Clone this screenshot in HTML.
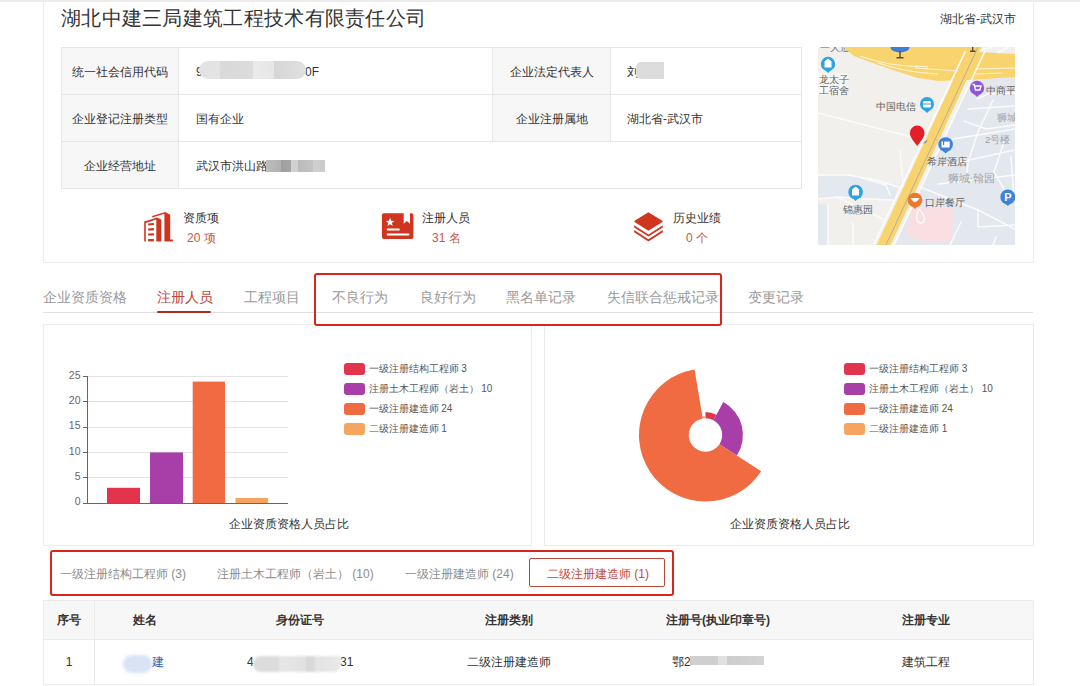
<!DOCTYPE html>
<html><head><meta charset="utf-8">
<style>
*{margin:0;padding:0;box-sizing:border-box}
html,body{width:1080px;height:686px;overflow:hidden;background:#fff}
body{position:relative;font-family:"Liberation Sans",sans-serif;color:#333}
.a{position:absolute;white-space:nowrap}
.box{position:absolute;border:1px solid #e6e6e6}
.cell{position:absolute;font-size:12px;color:#333;line-height:49px;height:46px}
.lab{background:#f7f7f7;text-align:center}
.redbox{position:absolute;z-index:5;border:2px solid #d9261c;border-radius:3px}
.tab{position:absolute;top:287px;font-size:14px;color:#999;line-height:20px}
.leg{position:absolute;font-size:10px;color:#555;line-height:14px}
.sw{position:absolute;width:21px;height:12px;border-radius:3px}
.th{position:absolute;top:600px;height:40px;line-height:40px;font-size:12px;font-weight:bold;color:#333;text-align:center}
.td{position:absolute;top:640px;height:44px;line-height:44px;font-size:12px;color:#333;text-align:center}
.blur{position:absolute;background:#cfcfcf;filter:blur(2px);border-radius:4px}
</style></head><body>
<!-- top strip line -->
<div class="a" style="left:0;top:0;width:1080px;height:2px;background:#ededed"></div>
<!-- outer container -->
<div class="box" style="left:43px;top:1px;width:991px;height:262px;border-top:none;border-color:#ececec"></div>
<div class="a" style="left:61px;top:7px;font-size:20px;line-height:22px;color:#333;letter-spacing:0.3px">湖北中建三局建筑工程技术有限责任公司</div>
<div class="a" style="left:940px;top:11px;font-size:12px;line-height:16px;color:#333">湖北省-武汉市</div>

<!-- info table -->
<div class="box" style="left:61px;top:47px;width:741px;height:142px"></div>
<div class="cell lab" style="left:62px;top:48px;width:116px">统一社会信用代码</div>
<div class="cell lab" style="left:62px;top:95px;width:116px">企业登记注册类型</div>
<div class="cell lab" style="left:62px;top:142px;width:116px">企业经营地址</div>
<div class="cell lab" style="left:493px;top:48px;width:117px">企业法定代表人</div>
<div class="cell lab" style="left:493px;top:95px;width:117px">企业注册属地</div>
<div class="a" style="left:61px;top:94px;width:741px;height:1px;background:#e6e6e6"></div>
<div class="a" style="left:61px;top:141px;width:741px;height:1px;background:#e6e6e6"></div>
<div class="a" style="left:178px;top:47px;width:1px;height:142px;background:#e6e6e6"></div>
<div class="a" style="left:492px;top:47px;width:1px;height:94px;background:#e6e6e6"></div>
<div class="a" style="left:610px;top:47px;width:1px;height:94px;background:#e6e6e6"></div>
<div class="cell" style="left:196px;top:48px">9</div>
<div class="cell" style="left:305px;top:48px">0F</div>
<div class="a" style="left:199px;top:61px;width:107px;height:18px;border-radius:9px;background:linear-gradient(90deg,#e3e3e3 0,#e3e3e3 20%,#d9d9d9 20%,#dcdcdc 50%,#ebebeb 50%,#e6e6e6 70%,#d6d6d6 70%,#e0e0e0 100%);filter:blur(0.6px)"></div>
<div class="cell" style="left:196px;top:95px">国有企业</div>
<div class="cell" style="left:196px;top:142px">武汉市洪山路</div>
<div class="a" style="left:266px;top:160px;width:59px;height:12px;background:linear-gradient(90deg,#bdbdbd 0,#b0b0b0 25%,#9e9e9e 25%,#a5a5a5 42%,#d2d2d2 42%,#cfcfcf 55%,#bababa 55%,#c4c4c4 80%,#d0d0d0 80%,#cacaca 100%);filter:blur(0.6px)"></div>
<div class="cell" style="left:627px;top:48px">刘</div>
<div class="a" style="left:636px;top:62px;width:28px;height:17px;border-radius:5px 0 0 5px;background:#dcdcdc;filter:blur(0.6px)"></div>
<div class="cell" style="left:627px;top:95px">湖北省-武汉市</div>

<!-- stats -->
<div class="a" style="left:183px;top:210px;font-size:12px;line-height:16px;color:#333">资质项</div>
<div class="a" style="left:187px;top:230px;font-size:12px;line-height:16px;color:#c4584a">20 项</div>
<div class="a" style="left:422px;top:210px;font-size:12px;line-height:16px;color:#333">注册人员</div>
<div class="a" style="left:432px;top:230px;font-size:12px;line-height:16px;color:#c4584a">31 名</div>
<div class="a" style="left:673px;top:210px;font-size:12px;line-height:16px;color:#333">历史业绩</div>
<div class="a" style="left:686px;top:230px;font-size:12px;line-height:16px;color:#c4584a">0 个</div>

<!-- map placeholder -->
<svg class="a" style="left:818px;top:47px" width="197" height="198" viewBox="0 0 197 198">
<rect width="197" height="198" fill="#f1f0ed"/>
<!-- blue-gray regions -->
<path d="M153 33 L197 29 L197 198 L77 198 Z" fill="#e3e7ee"/>
<path d="M0 128 L30 128 L58 133 L80 140 L76 153 L50 152 L20 150 L0 152 Z" fill="#e4e8ef"/>
<path d="M0 156 L9 158 L10 198 L0 198 Z" fill="#e4e8ef"/>
<!-- pink -->
<path d="M94 161 L135 161 L134 194 L108 195 L87 188 Z" fill="#f9dfe1"/>
<!-- white minor roads -->
<g stroke="#fbfbfb" stroke-width="1.5" fill="none" stroke-linecap="round">
<path d="M0 66 L98 91"/>
<path d="M0 152 L20 150 L50 152 L76 153"/>
<path d="M0 128 L30 128 L58 133 L80 140"/>
<path d="M10 158 L10 198"/>
<path d="M19 150 L65 172"/>
<path d="M44 131 L68 138 L72 148"/>
<path d="M35 176 L35 198"/>
<path d="M82 103 L86 148" stroke-width="1.2"/>
<path d="M159 52 L170 47 L197 46"/>
<path d="M150 62 L197 59"/>
<path d="M146 74 L168 82 L197 78"/>
<path d="M135 92 L197 82"/>
<path d="M128 118 L197 103"/>
<path d="M175 53 L160 85 L150 115 L148 136"/>
<path d="M186 95 L176 125 L186 142"/>
<path d="M120 137 L197 128"/>
<path d="M102 140 L160 163 L197 182"/>
<path d="M160 163 L160 180 L197 178"/>
<path d="M143 175 L132 198"/>
<path d="M178 190 L175 198"/>
<path d="M100 164 Q96 176 104 176 Q110 172 101 162"/>
<path d="M193 110 L196 150"/>
</g>
<rect x="-2" y="26" width="32" height="22" rx="2" fill="#f7f7f6"/>
<text x="2" y="3.5" font-family="Liberation Sans" font-size="9.6" fill="#6a6a6a">一大道</text>
<!-- highway band -->
<path d="M25 0 L152 0 L160 5 L197 7 L197 30 L150 33 L120 34 L100 31 L75 23 L52 15 L36 9 Z" fill="#f8d36e"/>
<path d="M160 4 L175 0 M180 6 L190 0" stroke="#fbfbfb" stroke-width="1.5"/>
<g stroke="#fffbe8" stroke-width="1.1" fill="none" opacity="0.85">
<path d="M42 9 Q62 16 80 18 L100 20"/>
<path d="M60 16 Q90 26 120 27"/>
<path d="M97 19 L110 20"/>
<path d="M157 22 L197 21"/>
<path d="M158 27 L185 26"/>
<path d="M97 21 L140 24"/>
</g>
<!-- diagonal road -->
<path d="M150.6 0 L163.7 0 L72.6 198 L58.6 198 Z" fill="#f8d36e"/>
<path d="M160 0 L68 198" stroke="#a9aca8" stroke-width="0.9" fill="none"/>
<path d="M147.5 4 L55.5 198" stroke="#fdfdfd" stroke-width="1.6" fill="none"/>
<path d="M167 4 L76 198" stroke="#fdfdfd" stroke-width="1.6" fill="none"/>
<!-- top pin -->
<ellipse cx="82" cy="0.5" rx="9.5" ry="5" fill="#3d7fd6"/>
<rect x="81.3" y="4" width="1.4" height="7" fill="#5a4a3a"/>
<rect x="78.5" y="10" width="7" height="1.5" fill="#5a4a3a"/>
<rect x="154" y="0" width="1.4" height="4.5" fill="#5a4a3a"/>
<rect x="152" y="3.5" width="5.5" height="1.5" fill="#5a4a3a"/>
<!-- POIs -->
<g fill="#2ea3e2">
<circle cx="10" cy="17" r="7.2"/><path d="M5.5 21.5 L10 26 L14.5 21.5 Z"/>
<circle cx="109" cy="57" r="7"/><path d="M104.5 61.5 L109 66 L113.5 61.5 Z"/>
<circle cx="37.6" cy="145" r="7.3"/><path d="M33 149.5 L37.6 154 L42.2 149.5 Z"/>
</g>
<g fill="#fff">
<rect x="6.5" y="15" width="7" height="5.5"/><path d="M6 15 L10 11.5 L14 15 Z"/>
<rect x="105" y="54" width="8" height="6.5" rx="1.5"/>
<rect x="34" y="143" width="7" height="5.5"/><path d="M33.5 143 L37.6 139.5 L41.7 143 Z"/>
</g>
<rect x="105" y="56.5" width="8" height="1" fill="#2ea3e2"/>
<circle cx="159" cy="41" r="7.2" fill="#9155d8"/><path d="M154.5 45.5 L159 50 L163.5 45.5 Z" fill="#9155d8"/>
<path d="M154.5 37.5 L156.2 37.5 L157.5 43 L161.8 43 L163 39 L156.8 39" stroke="#fff" stroke-width="1.4" fill="none"/>
<circle cx="127.6" cy="97.5" r="7.3" fill="#3f82d8"/><path d="M123.2 102 L127.6 106.5 L132 102 Z" fill="#3f82d8"/>
<rect x="123.5" y="94.5" width="8.2" height="6" fill="#fff"/><rect x="125" y="94" width="1.2" height="4" fill="#3f82d8"/>
<circle cx="97" cy="153" r="7.3" fill="#ee7830"/><path d="M92.6 157.5 L97 162 L101.4 157.5 Z" fill="#ee7830"/>
<path d="M92.5 151 Q97 159 101.5 151 Z" fill="#fff"/>
<circle cx="189.8" cy="150" r="7.5" fill="#3f82d8"/><path d="M185.3 154.5 L189.8 159 L194.3 154.5 Z" fill="#3f82d8"/>
<text x="190" y="154" font-family="Liberation Sans" font-weight="bold" font-size="11" fill="#fff" text-anchor="middle">P</text>
<!-- red marker -->
<path d="M104.5 96.5 L109.5 92.5 L108 96 Z" fill="#8c8c8c"/>
<path d="M99.2 99 C93 91.5 91.9 88.5 91.9 85.8 A7.3 7.3 0 0 1 106.5 85.8 C106.5 88.5 105.4 91.5 99.2 99 Z" fill="#e31f29"/>
<!-- labels -->
<g font-family="Liberation Sans" font-size="9.6" fill="#5f5f5f">
<text x="1" y="36">龙太子</text>
<text x="1" y="47">工宿舍</text>
<text x="58" y="63">中国电信</text>
<text x="168.3" y="47">中商平</text>
<text x="108.6" y="118">希岸酒店</text>
<text x="24.5" y="165.5">锦惠园</text>
<text x="107" y="158.5">口岸餐厅</text>
</g>
<g font-family="Liberation Sans" fill="#a2a4a8">
<text x="179" y="74" font-size="9.6">狮城</text>
<text x="167" y="96" font-size="9.6">2号楼</text>
<text x="129.6" y="134.5" font-size="11">狮城·翰园</text>
</g>
</svg>

<!-- tabs -->
<div class="a" style="left:43px;top:312px;width:990px;height:1px;background:#e0e0e0"></div>
<div class="tab" style="left:43px">企业资质资格</div>
<div class="tab" style="left:157px;color:#b9473c">注册人员</div>
<div class="a" style="left:157px;top:311px;width:54px;height:2px;background:#b0291d;border-radius:1px"></div>
<div class="tab" style="left:244px">工程项目</div>
<div class="tab" style="left:332px">不良行为</div>
<div class="tab" style="left:420px">良好行为</div>
<div class="tab" style="left:506px">黑名单记录</div>
<div class="tab" style="left:607px">失信联合惩戒记录</div>
<div class="tab" style="left:748px">变更记录</div>
<div class="redbox" style="left:314px;top:273px;width:408px;height:53px"></div>

<!-- chart panels -->
<div class="box" style="left:43px;top:324px;width:489px;height:222px;border-color:#ebebeb"></div>
<div class="box" style="left:544px;top:324px;width:490px;height:222px;border-color:#ebebeb"></div>


<!-- charts svg -->
<svg class="a" style="left:0;top:0" width="1080" height="686" viewBox="0 0 1080 686">
<g stroke="#e3e3e3" stroke-width="1">
<line x1="88" y1="376.5" x2="288" y2="376.5"/>
<line x1="88" y1="401.5" x2="288" y2="401.5"/>
<line x1="88" y1="427.5" x2="288" y2="427.5"/>
<line x1="88" y1="452.5" x2="288" y2="452.5"/>
<line x1="88" y1="477.5" x2="288" y2="477.5"/>
</g>
<g fill="#e3344d"><rect x="107" y="487.8" width="33" height="15.2"/></g>
<rect x="150" y="452.4" width="33" height="50.6" fill="#a83fa8"/>
<rect x="192.7" y="381.6" width="32.3" height="121.4" fill="#f06b42"/>
<rect x="235.5" y="497.9" width="32.5" height="5.1" fill="#f5a560"/>
<g stroke="#666" stroke-width="1">
<line x1="87.5" y1="376" x2="87.5" y2="503.5"/>
<line x1="83" y1="503.5" x2="288" y2="503.5"/>
<line x1="83" y1="376.5" x2="88" y2="376.5"/>
<line x1="83" y1="401.5" x2="88" y2="401.5"/>
<line x1="83" y1="427.5" x2="88" y2="427.5"/>
<line x1="83" y1="452.5" x2="88" y2="452.5"/>
<line x1="83" y1="477.5" x2="88" y2="477.5"/>
</g>
<g font-family="Liberation Sans" font-size="10.5" fill="#666" text-anchor="end">
<text x="80.5" y="378.8">25</text>
<text x="80.5" y="404.1">20</text>
<text x="80.5" y="429.4">15</text>
<text x="80.5" y="454.7">10</text>
<text x="80.5" y="480">5</text>
<text x="80.5" y="505.3">0</text>
</g>
<path d="M705.50 412.07 A22.92 22.92 0 0 1 716.41 414.84 L713.45 420.31 A16.70 16.70 0 0 0 705.50 418.30 Z" fill="#e3344d"/>
<path d="M723.32 402.06 A37.45 37.45 0 0 1 736.85 455.48 L719.48 444.13 A16.70 16.70 0 0 0 713.45 420.31 Z" fill="#a83fa8"/>
<path d="M761.17 471.37 A66.50 66.50 0 1 1 694.55 369.41 L702.75 418.53 A16.70 16.70 0 1 0 719.48 444.13 Z" fill="#f06b42"/>
<path d="M702.41 416.48 A18.77 18.77 0 0 1 705.50 416.23 L705.50 418.30 A16.70 16.70 0 0 0 702.75 418.53 Z" fill="#f5a560"/>
<!-- icons -->
<g transform="translate(140,208)" fill="#d0361f">
<path d="M4.2 13.6 L17.2 9.4 L21.3 11.4 L21.3 33.6 L16.3 33.6 L16.3 11.5 L5.8 14.9 L5.8 33.6 L4.2 33.6 Z"/>
<path d="M12.1 7.9 L25.2 3.9 L30.2 6.8 L30.2 31.5 L32.9 31.5 L32.9 33.6 L24.4 33.6 L24.4 5.8 L12.3 9.5 Z"/>
<path d="M8.1 15.4 L13.9 14.9 L13.9 17.1 L8.1 17.5 Z"/>
<path d="M8.1 20.4 L13.9 20.1 L13.9 22.4 L8.1 22.6 Z"/>
<path d="M8.1 25.4 L13.9 25.2 L13.9 27.4 L8.1 27.6 Z"/>
<rect x="8.1" y="31" width="5.8" height="2.4"/>
</g>
<g transform="translate(378,208)">
<rect x="3.9" y="5.2" width="31.5" height="25.8" rx="2" fill="#d0361f"/>
<path d="M25.7 5 L32 5 L32 15.8 L28.85 12.9 L25.7 15.8 Z" fill="#fff"/>
<path d="M12.1 9.8 L13.2 12.8 L16.4 12.9 L13.9 14.9 L14.8 18 L12.1 16.2 L9.4 18 L10.3 14.9 L7.8 12.9 L11 12.8 Z" fill="#fff"/>
<rect x="8.7" y="20.5" width="13.1" height="2" rx="1" fill="#fff"/>
<rect x="8.7" y="25.5" width="22.8" height="2" rx="1" fill="#fff"/>
</g>
<g transform="translate(630,208)" fill="#d0361f">
<path d="M18.4 5 L32 13.4 L18.4 21.9 L5 13.4 Z" stroke="#d0361f" stroke-width="1.4" stroke-linejoin="round"/>
<path d="M4.2 17.3 L18.4 26.4 L32.8 17.3 L32.8 19.5 L18.4 28.6 L4.2 19.5 Z"/>
<path d="M4.2 22 L18.4 31.2 L32.8 22 L32.8 24.2 L18.4 33.4 L4.2 24.2 Z"/>
</g>
</svg>
<div class="sw" style="left:343.5px;top:363.3px;background:#e3344d"></div>
<div class="sw" style="left:343.5px;top:383.3px;background:#a83fa8"></div>
<div class="sw" style="left:343.5px;top:403.3px;background:#f06b42"></div>
<div class="sw" style="left:343.5px;top:423.3px;background:#f5a560"></div>
<div class="leg" style="left:368.5px;top:362px">一级注册结构工程师 3</div>
<div class="leg" style="left:368.5px;top:382px">注册土木工程师（岩土） 10</div>
<div class="leg" style="left:368.5px;top:402px">一级注册建造师 24</div>
<div class="leg" style="left:368.5px;top:422px">二级注册建造师 1</div>
<div class="sw" style="left:843.6px;top:363.3px;background:#e3344d"></div>
<div class="sw" style="left:843.6px;top:383.3px;background:#a83fa8"></div>
<div class="sw" style="left:843.6px;top:403.3px;background:#f06b42"></div>
<div class="sw" style="left:843.6px;top:423.3px;background:#f5a560"></div>
<div class="leg" style="left:869px;top:362px">一级注册结构工程师 3</div>
<div class="leg" style="left:869px;top:382px">注册土木工程师（岩土） 10</div>
<div class="leg" style="left:869px;top:402px">一级注册建造师 24</div>
<div class="leg" style="left:869px;top:422px">二级注册建造师 1</div>
<div class="a" style="left:229px;top:516px;font-size:12px;line-height:16px;color:#333">企业资质资格人员占比</div>
<div class="a" style="left:730px;top:516px;font-size:12px;line-height:16px;color:#333">企业资质资格人员占比</div>

<!-- filter buttons -->
<div class="a" style="left:60px;top:566px;font-size:12px;line-height:16px;color:#8c8c8c">一级注册结构工程师 (3)</div>
<div class="a" style="left:217px;top:566px;font-size:12px;line-height:16px;color:#8c8c8c">注册土木工程师（岩土） (10)</div>
<div class="a" style="left:405px;top:566px;font-size:12px;line-height:16px;color:#8c8c8c">一级注册建造师 (24)</div>
<div class="a" style="left:529px;top:558px;width:136px;height:29px;border:1px solid #b94a3a;border-radius:2px"></div>
<div class="a" style="left:547px;top:566px;font-size:12px;line-height:16px;color:#c4473a">二级注册建造师 (1)</div>
<div class="redbox" style="left:50px;top:550px;width:624px;height:46px"></div>

<!-- table -->
<div class="a" style="left:43px;top:601px;width:990px;height:39px;background:#f7f7f7"></div>
<div class="box" style="left:43px;top:600px;width:991px;height:85px;border-color:#ebebeb"></div>
<div class="a" style="left:43px;top:639px;width:990px;height:1px;background:#ebebeb"></div>
<div class="a" style="left:94px;top:601px;width:1px;height:83px;background:#ebebeb"></div>
<div class="th" style="left:44px;width:50px">序号</div>
<div class="th" style="left:95px;width:99px">姓名</div>
<div class="th" style="left:194px;width:212px">身份证号</div>
<div class="th" style="left:406px;width:206px">注册类别</div>
<div class="th" style="left:612px;width:212px">注册号(执业印章号)</div>
<div class="th" style="left:821px;width:209px">注册专业</div>
<div class="td" style="left:44px;width:50px">1</div>
<div class="a" style="left:151.6px;top:654px;font-size:12px;line-height:16px;color:#2a5db0">建</div>
<div class="a" style="left:123px;top:655px;width:29px;height:18px;border-radius:9px;background:#d9e2f6;filter:blur(1.8px)"></div>
<div class="a" style="left:247px;top:654px;font-size:12px;line-height:16px;color:#333">4</div>
<div class="a" style="left:340px;top:654px;font-size:12px;line-height:16px;color:#333">31</div>
<div class="a" style="left:253px;top:656px;width:88px;height:16px;border-radius:8px 0 8px 8px;background:linear-gradient(90deg,#dcdcdc 0,#dcdcdc 30%,#e6e6e6 30%,#e2e2e2 60%,#d6d6d6 60%,#d9d9d9 70%,#e4e4e4 70%,#e8e8e8 100%);filter:blur(1px)"></div>
<div class="td" style="left:406px;width:206px">二级注册建造师</div>
<div class="a" style="left:672px;top:654px;font-size:12px;line-height:16px;color:#333">鄂2</div>
<div class="a" style="left:690px;top:656px;width:74px;height:9px;background:linear-gradient(90deg,#cfcfcf 0,#cfcfcf 38%,#e0e0e0 38%,#e0e0e0 50%,#cdcdcd 50%,#d3d3d3 100%);filter:blur(0.6px)"></div>
<div class="td" style="left:821px;width:209px">建筑工程</div>
</body></html>
